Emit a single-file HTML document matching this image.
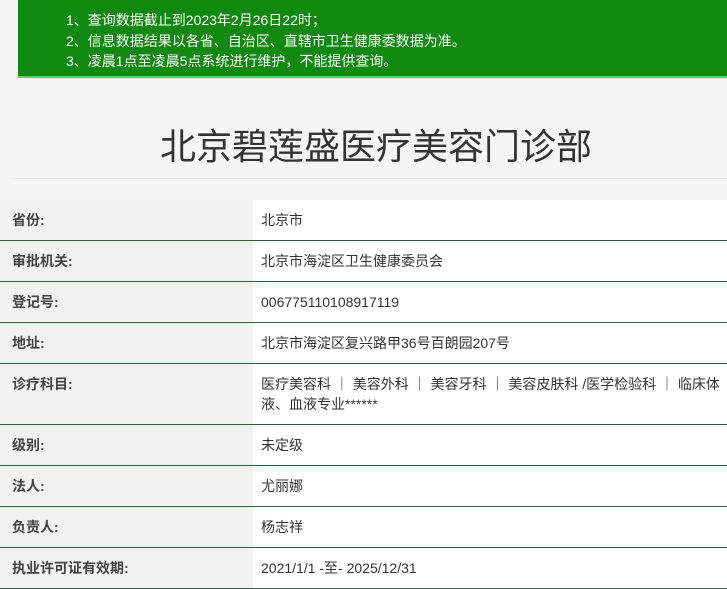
<!DOCTYPE html>
<html><head><meta charset="utf-8"><style>
body{margin:0;width:727px;height:580px;overflow:hidden;background:#f5f5f5;font-family:"Liberation Sans","Noto Sans CJK SC",sans-serif;position:relative;}
.notice{position:absolute;left:18px;top:0;width:709px;height:78px;background:#11880f;border-bottom:2px solid #5dcf5a;box-sizing:border-box;color:#fff;font-size:14px;}
.notice div{position:absolute;left:48px;}
h1{position:absolute;top:118px;left:0;width:752px;text-align:center;margin:0;font-weight:normal;font-size:36px;color:#333;}
.hr{position:absolute;left:12px;top:178px;width:715px;height:1px;background:#e8e8e8;}
.row{position:absolute;left:0;width:727px;border-bottom:1px solid #2f5d43;font-size:14px;color:#333;}
.row .l{position:absolute;left:0;top:0;bottom:0;width:253px;background:#f2f2f2;font-weight:bold;color:#444;padding-left:12px;box-sizing:border-box;}
.row .v{position:absolute;left:253px;right:0;top:0;bottom:0;background:#fff;padding:0 4px 0 8px;}
.row span{display:block;line-height:20px;}
</style></head><body>
<div class="notice">
<div style="top:10px">1、查询数据截止到2023年2月26日22时；</div>
<div style="top:31px">2、信息数据结果以各省、自治区、直辖市卫生健康委数据为准。</div>
<div style="top:51px">3、凌晨1点至凌晨5点系统进行维护，不能提供查询。</div>
</div>
<h1>北京碧莲盛医疗美容门诊部</h1>
<div class="hr"></div>
<div class="row" style="top:200px;height:40px"><div class="l"><span style="margin-top:10px">省份:</span></div><div class="v"><span style="margin-top:10px">北京市</span></div></div>
<div class="row" style="top:241px;height:40px"><div class="l"><span style="margin-top:10px">审批机关:</span></div><div class="v"><span style="margin-top:10px">北京市海淀区卫生健康委员会</span></div></div>
<div class="row" style="top:282px;height:40px"><div class="l"><span style="margin-top:10px">登记号:</span></div><div class="v"><span style="margin-top:10px">006775110108917119</span></div></div>
<div class="row" style="top:323px;height:40px"><div class="l"><span style="margin-top:10px">地址:</span></div><div class="v"><span style="margin-top:10px">北京市海淀区复兴路甲36号百朗园207号</span></div></div>
<div class="row" style="top:364px;height:60px"><div class="l"><span style="margin-top:10px">诊疗科目:</span></div><div class="v"><span style="margin-top:10px">医疗美容科 ｜ 美容外科 ｜ 美容牙科 ｜ 美容皮肤科 /医学检验科 ｜ 临床体<br>液、血液专业******</span></div></div>
<div class="row" style="top:425px;height:40px"><div class="l"><span style="margin-top:10px">级别:</span></div><div class="v"><span style="margin-top:10px">未定级</span></div></div>
<div class="row" style="top:466px;height:40px"><div class="l"><span style="margin-top:10px">法人:</span></div><div class="v"><span style="margin-top:10px">尤丽娜</span></div></div>
<div class="row" style="top:507px;height:40px"><div class="l"><span style="margin-top:10px">负责人:</span></div><div class="v"><span style="margin-top:10px">杨志祥</span></div></div>
<div class="row" style="top:548px;height:40px"><div class="l"><span style="margin-top:10px">执业许可证有效期:</span></div><div class="v"><span style="margin-top:10px">2021/1/1 -至- 2025/12/31</span></div></div>
</body></html>
